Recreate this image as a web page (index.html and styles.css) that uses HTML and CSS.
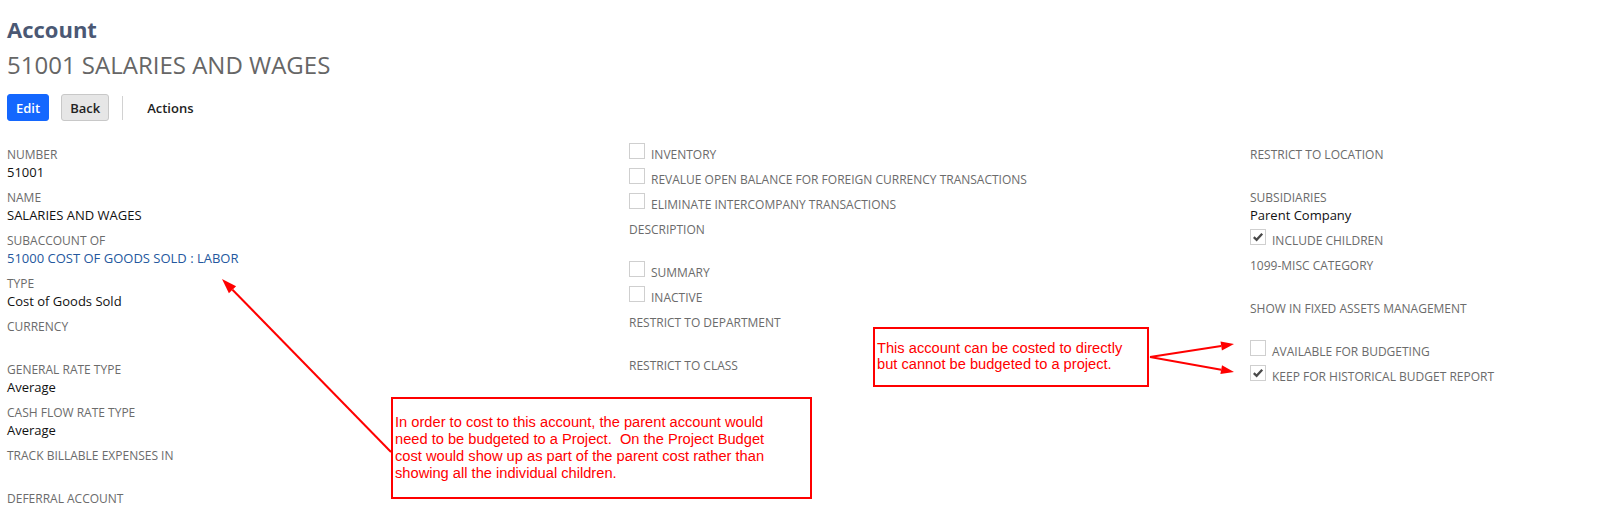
FILE: index.html
```html
<!DOCTYPE html>
<html lang="en">

<head>
  <meta charset="UTF-8">
  <meta name="viewport" content="width=device-width, initial-scale=1.0">
  <title>Account</title>
  <link rel="stylesheet" href="styles.css">
</head>

<body>
  <div class="page">
    <h1 class="title">Account</h1>
    <h2 class="subtitle">51001 SALARIES AND WAGES</h2>

    <div class="toolbar">
      <button class="btn btn-primary">Edit</button>
      <button class="btn">Back</button>
      <span class="toolbar-sep"></span>
      <span class="actions">Actions</span>
    </div>

    <div class="fields">
      <div class="col">
        <div class="field">
          <div class="label">NUMBER</div>
          <div class="value">51001</div>
        </div>
        <div class="field">
          <div class="label">NAME</div>
          <div class="value">SALARIES AND WAGES</div>
        </div>
        <div class="field">
          <div class="label">SUBACCOUNT OF</div>
          <div class="value"><a class="link" href="#">51000 COST OF GOODS SOLD : LABOR</a></div>
        </div>
        <div class="field">
          <div class="label">TYPE</div>
          <div class="value">Cost of Goods Sold</div>
        </div>
        <div class="field">
          <div class="label">CURRENCY</div>
          <div class="value"></div>
        </div>
        <div class="field">
          <div class="label">GENERAL RATE TYPE</div>
          <div class="value">Average</div>
        </div>
        <div class="field">
          <div class="label">CASH FLOW RATE TYPE</div>
          <div class="value">Average</div>
        </div>
        <div class="field">
          <div class="label">TRACK BILLABLE EXPENSES IN</div>
          <div class="value"></div>
        </div>
        <div class="field">
          <div class="label">DEFERRAL ACCOUNT</div>
          <div class="value"></div>
        </div>
      </div>

      <div class="col">
        <div class="check">
          <span class="box"></span>
          <span class="label">INVENTORY</span>
        </div>
        <div class="check">
          <span class="box"></span>
          <span class="label">REVALUE OPEN BALANCE FOR FOREIGN CURRENCY TRANSACTIONS</span>
        </div>
        <div class="check">
          <span class="box"></span>
          <span class="label">ELIMINATE INTERCOMPANY TRANSACTIONS</span>
        </div>
        <div class="field">
          <div class="label">DESCRIPTION</div>
          <div class="value"></div>
        </div>
        <div class="check">
          <span class="box"></span>
          <span class="label">SUMMARY</span>
        </div>
        <div class="check">
          <span class="box"></span>
          <span class="label">INACTIVE</span>
        </div>
        <div class="field">
          <div class="label">RESTRICT TO DEPARTMENT</div>
          <div class="value"></div>
        </div>
        <div class="field">
          <div class="label">RESTRICT TO CLASS</div>
          <div class="value"></div>
        </div>
      </div>

      <div class="col">
        <div class="field">
          <div class="label">RESTRICT TO LOCATION</div>
          <div class="value"></div>
        </div>
        <div class="field">
          <div class="label">SUBSIDIARIES</div>
          <div class="value">Parent Company</div>
        </div>
        <div class="check">
          <span class="box checked"><svg viewBox="0 0 16 16"><path d="M3.2 8.2 L6.4 11.2 L12.8 4.2" /></svg></span>
          <span class="label">INCLUDE CHILDREN</span>
        </div>
        <div class="field">
          <div class="label">1099-MISC CATEGORY</div>
          <div class="value"></div>
        </div>
        <div class="field">
          <div class="label">SHOW IN FIXED ASSETS MANAGEMENT</div>
          <div class="value"></div>
        </div>
        <div class="check">
          <span class="box"></span>
          <span class="label">AVAILABLE FOR BUDGETING</span>
        </div>
        <div class="check">
          <span class="box checked"><svg viewBox="0 0 16 16"><path d="M3.2 8.2 L6.4 11.2 L12.8 4.2" /></svg></span>
          <span class="label">KEEP FOR HISTORICAL BUDGET REPORT</span>
        </div>
      </div>
    </div>
  </div>

  <!-- annotations drawn over the form -->
  <div class="notes">
    <svg class="arrows" width="1605" height="532" viewBox="0 0 1605 532">
      <line x1="391" y1="452" x2="232.5" y2="289.7" />
      <polygon points="222,279 228.9,293.2 236.1,286.2" />

      <line x1="1150" y1="357" x2="1221.2" y2="346" />
      <polygon points="1234,344 1220.5,341.5 1221.9,350.4" />
      <line x1="1150" y1="357" x2="1221.2" y2="369.7" />
      <polygon points="1234,372 1222,365.3 1220.4,374.1" />
    </svg>

    <div class="note note-parent">
      In order to cost to this account, the parent account would<br>
      need to be budgeted to a Project.&nbsp; On the Project Budget<br>
      cost would show up as part of the parent cost rather than<br>
      showing all the individual children.
    </div>

    <div class="note note-budget">
      This account can be costed to directly<br>
      but cannot be budgeted to a project.
    </div>
  </div>
</body>

</html>
```

FILE: styles.css
```css
body {
  margin: 0;
  background: #fff;
  font-family: "Open Sans", "Liberation Sans", sans-serif;
  color: #222;
}

.page {
  padding: 16px 7px 0;
}

.title {
  margin: 0;
  font-size: 22px;
  line-height: 26.4px;
  font-weight: 700;
  color: #4b5874;
}

.subtitle {
  margin: 8px 0 0;
  font-size: 24px;
  line-height: 30px;
  font-weight: 400;
  color: #666;
}

.toolbar {
  display: flex;
  align-items: center;
  margin-top: 14px;
  height: 27px;
}

.btn {
  height: 27px;
  padding: 0 8px;
  border: 1px solid #c8c8c8;
  border-radius: 3px;
  background: #e6e6e6;
  font-family: inherit;
  font-size: 13px;
  font-weight: 600;
  color: #222;
  margin-right: 12px;
}

.btn-primary {
  background: #1467fe;
  border-color: #1467fe;
  color: #fff;
}

.toolbar-sep {
  width: 1px;
  height: 24px;
  background: #d2d2d2;
  margin-left: 1px;
  margin-right: 24px;
}

.actions {
  font-size: 13px;
  font-weight: 600;
  color: #222;
}

.fields {
  display: grid;
  grid-template-columns: 622px 621px 1fr;
  margin-top: 25px;
}

.field {
  margin-bottom: 8px;
}

.label {
  font-size: 12px;
  line-height: 17px;
  color: #6b6b6b;
}

.value {
  font-size: 13px;
  line-height: 18px;
  min-height: 18px;
  color: #111;
}

.link {
  color: #24589e;
  text-decoration: none;
}

.check {
  display: flex;
  align-items: flex-start;
  height: 25px;
}

.check .box {
  box-sizing: border-box;
  width: 16px;
  height: 16px;
  margin-top: -3px;
  margin-right: 6px;
  border: 1px solid #cfcfcf;
  background: #fff;
}

.check .box svg {
  display: block;
  width: 14px;
  height: 14px;
}

.check .box path {
  fill: none;
  stroke: #4a4a4a;
  stroke-width: 2.6;
}

.notes {
  position: absolute;
  top: 0;
  left: 0;
  width: 1605px;
  height: 532px;
  pointer-events: none;
}

.arrows {
  position: absolute;
  top: 0;
  left: 0;
}

.arrows line {
  stroke: #ff0000;
  stroke-width: 2;
}

.arrows polygon {
  fill: #ff0000;
}

.note {
  position: absolute;
  box-sizing: border-box;
  border: 2px solid #ff0000;
  background: #fff;
  font-family: "Liberation Sans", Arial, sans-serif;
  font-size: 14.67px;
  color: #ff0000;
  padding-left: 2px;
}

.note-parent {
  left: 391px;
  top: 397px;
  width: 421px;
  height: 102px;
  padding-top: 15px;
  line-height: 17px;
}

.note-budget {
  left: 873px;
  top: 327px;
  width: 276px;
  height: 60px;
  padding-top: 11px;
  line-height: 16px;
}
```
